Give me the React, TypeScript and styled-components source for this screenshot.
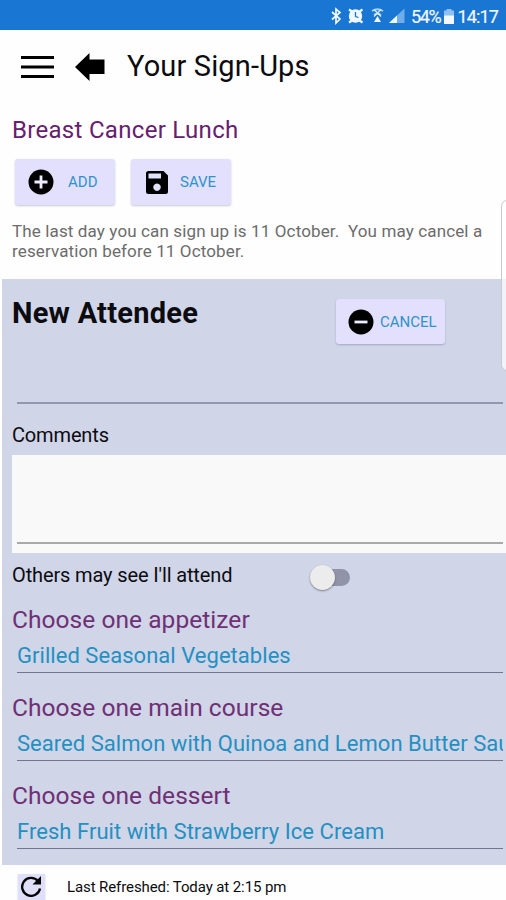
import React from 'react';
import styled, { createGlobalStyle } from 'styled-components';

const GlobalStyle = createGlobalStyle`
  *, *::before, *::after { box-sizing: border-box; }
  body { margin: 0; background: #fff; font-family: Roboto, "Liberation Sans", sans-serif; color: #0c0c10; }
  h1, h2, p { margin: 0; font-weight: 400; }
  button { font: inherit; border: 0; padding: 0; }
`;

const Screen = styled.div`
  position: relative;
  width: 506px;
  height: 900px;
  overflow: hidden;
  display: flex;
  flex-direction: column;
  background: #fefefe;
  white-space: nowrap;
`;

const StatusBar = styled.div`
  height: 30px;
  flex: none;
  display: flex;
  align-items: center;
  justify-content: flex-end;
  padding: 2px 5px 0 0;
  background: #1976d2;
  color: #f2f8ff;
  font-size: 18px;
  svg { display: block; flex: none; }
`;

const StatusText = styled.span<{ $width: number; $spacing: number }>`
  width: ${(p) => p.$width}px;
  letter-spacing: ${(p) => p.$spacing}px;
  -webkit-text-stroke: 0.2px currentColor;
`;

const Header = styled.header`
  height: 72px;
  flex: none;
  display: flex;
  align-items: center;
  padding: 2px 0 0 21px;
  svg { display: block; }
`;

const Title = styled.h1`
  margin: -2px 0 0 22px;
  font-size: 29px;
  line-height: 40px;
  letter-spacing: 0.15px;
`;

const EventName = styled.h2`
  height: 56px;
  flex: none;
  padding: 12px 0 0 12px;
  font-size: 24px;
  line-height: 32px;
  letter-spacing: 0.3px;
  color: #66206f;
`;

const Actions = styled.div`
  flex: none;
  display: flex;
  gap: 16px;
  padding: 1px 0 0 15px;
`;

const ActionButton = styled.button<{ $width: number; $gap: number; $pad: number }>`
  width: ${(p) => p.$width}px;
  height: 46px;
  display: flex;
  align-items: center;
  gap: ${(p) => p.$gap}px;
  padding-left: ${(p) => p.$pad}px;
  border-radius: 3px;
  background: #e2e0fd;
  box-shadow: 0 1px 2px rgba(40, 40, 80, 0.25);
  color: #2f93c9;
  font-size: 15px;
  svg { display: block; flex: none; }
`;

const CancelButton = styled(ActionButton)`
  height: 45px;
`;

const Notice = styled.p`
  height: 74px;
  flex: none;
  padding: 16px 0 0 12px;
  font-size: 17px;
  line-height: 20px;
  letter-spacing: 0.13px;
  color: #6c6c6c;
  white-space: pre;
`;

const Panel = styled.main`
  height: 586px;
  flex: none;
  margin-left: 2px;
  padding-left: 10px;
  background: #d0d5e8;
  overflow: hidden;
`;

const PanelHead = styled.div`
  height: 74px;
  display: flex;
  align-items: flex-start;
  padding-top: 20px;
`;

const PanelTitle = styled.h2`
  width: 324px;
  margin-top: -6px;
  font-size: 29px;
  line-height: 40px;
  font-weight: 700;
  letter-spacing: 0.25px;
`;

const NameField = styled.div`
  height: 51px;
  margin: 0 3px 0 5px;
  border-bottom: 2px solid #9097ae;
`;

const Label = styled.div`
  height: 51px;
  padding-top: 16px;
  font-size: 20px;
  line-height: 30px;
  letter-spacing: -0.15px;
`;

const Comments = styled.div`
  height: 98px;
  padding: 0 3px 9px 5px;
  background: #f9f9f9;
  &::after {
    content: '';
    display: block;
    height: 89px;
    border-bottom: 2px solid #a9a9a9;
  }
`;

const SwitchRow = styled.div`
  height: 48px;
  display: flex;
  align-items: center;
  font-size: 20px;
  letter-spacing: -0.13px;
`;

const SwitchLabel = styled.span`
  width: 298px;
  margin-top: -4px;
`;

const Track = styled.span`
  display: flex;
  align-items: center;
  width: 40px;
  height: 17px;
  margin-top: 1px;
  border-radius: 9px;
  background: linear-gradient(to right, transparent 12px, #9194a9 12px);
`;

const Thumb = styled.span`
  flex: none;
  width: 25px;
  height: 25px;
  border-radius: 50%;
  background: #ececec;
  box-shadow: 0 1px 2px rgba(0, 0, 0, 0.4);
`;

const Course = styled.section`
  height: 88.2px;
`;

const CourseTitle = styled.h2`
  height: 36px;
  font-size: 24.5px;
  line-height: 38px;
  letter-spacing: 0.05px;
  color: #6f3075;
`;

const CourseChoice = styled.div`
  height: 36px;
  margin: 0 3px 0 5px;
  overflow: hidden;
  border-bottom: 1.5px solid #71778f;
  font-size: 22px;
  line-height: 38px;
  letter-spacing: 0.04px;
  color: #2490c2;
`;

const Footer = styled.footer`
  height: 35px;
  display: flex;
  align-items: center;
  padding: 8px 0 0 18px;
  font-size: 15px;
  letter-spacing: -0.1px;
`;

const RefreshButton = styled.button`
  width: 27px;
  height: 26px;
  margin: 0 22px 0 0;
  display: grid;
  place-items: center;
  background: #e0dffa;
  box-shadow: 0 1px 2px rgba(40, 40, 80, 0.2);
`;

const EdgeHandle = styled.div`
  position: absolute;
  left: 501px;
  top: 200px;
  width: 14px;
  height: 171px;
  border: 1px solid #c8cad0;
  border-radius: 6px;
  background: rgba(255, 255, 255, 0.72);
`;

const StatusIcons = () => (
  <svg width="81" height="20" viewBox="330 6 81 20" fill="none">
    <path d="M332 12l8 7-4 4V9l4 3.500-8 7" stroke="#f2f8ff" strokeWidth="1.700" />
    <g stroke="#f2f8ff" strokeWidth="2.200">
      <path d="M349 9.500l3 2M362.500 9.500l-3 2M349 22.500l3-2M362.500 22.500l-3-2" />
    </g>
    <circle cx="355.500" cy="16" r="6.700" fill="#f2f8ff" />
    <path d="M355.500 12v4.500l3 1" stroke="#1976d2" strokeWidth="1.300" />
    <path d="M372 11q5.500-3.500 11 0M374 15q3.500-2.500 7 0" stroke="#a9d0f5" strokeWidth="1.800" />
    <path d="M374 9.500l7 7M381 9.500l-7 7" stroke="#d8eaff" strokeWidth="1.300" />
    <path d="M377.500 16l3.500 6h-7z" fill="#f2f8ff" />
    <path d="M404.500 8.500V23H389z" fill="#6facea" />
    <path d="M397 15.600V23h-8z" fill="#f2f8ff" />
  </svg>
);

const Battery = () => (
  <svg width="10" height="15" viewBox="0 0 10 15">
    <path d="M2.500 0h5v1.500H10V15H0V1.500h2.500z" fill="#8fc0ef" />
    <path d="M0 6.500h10V15H0z" fill="#f2f8ff" />
  </svg>
);

const MenuIcon = () => (
  <svg width="33" height="24" viewBox="0 0 33 24">
    <path d="M0 2.500h33M0 12h33M0 21.500h33" stroke="#000" strokeWidth="3" />
  </svg>
);

const BackIcon = () => (
  <svg width="30" height="28" viewBox="0 0 30 28">
    <path d="M0 14L14.500 0v6.500H29.500v14.500H14.500V28z" fill="#000" />
  </svg>
);

const BackSlot = styled.span`
  margin-left: 21px;
`;

const CircleIcon = ({ plus = false }: { plus?: boolean }) => (
  <svg width="26" height="26" viewBox="0 0 26 26">
    <circle cx="13" cy="13" r="12.500" fill="#000" />
    <path d={plus ? 'M6.500 13h13M13 6.500v13' : 'M6.500 13h13'} stroke="#eeedff" strokeWidth="2.800" />
  </svg>
);

const SaveIcon = () => (
  <svg width="22" height="23" viewBox="0 0 22 23">
    <path
      fillRule="evenodd"
      d="M2.500 0H17.500L22 4.500V20.500Q22 23 19.500 23H2.500Q0 23 0 20.500V2.500Q0 0 2.500 0ZM2.500 2.600V7.500H15V2.600ZM11 12.500a3.700 3.700 0 1 0 .01 0Z"
      fill="#000"
    />
  </svg>
);

const RefreshIcon = () => (
  <svg width="21" height="21" viewBox="0 0 21 21" fill="none">
    <path d="M17 5A9 9 0 1 0 19 12.500" stroke="#050508" strokeWidth="2.300" />
    <path d="M20 0V8.500H11.500Z" fill="#050508" />
  </svg>
);

const courses = [
  { title: 'Choose one appetizer', choice: 'Grilled Seasonal Vegetables' },
  { title: 'Choose one main course', choice: 'Seared Salmon with Quinoa and Lemon Butter Sauce' },
  { title: 'Choose one dessert', choice: 'Fresh Fruit with Strawberry Ice Cream' },
];

export default function App() {
  return (
    <Screen>
      <GlobalStyle />
      <StatusBar>
        <StatusIcons />
        <StatusText $width={33} $spacing={-1.4}>54%</StatusText>
        <Battery />
        <StatusText $width={47} $spacing={-0.9}>&nbsp;14:17</StatusText>
      </StatusBar>
      <Header>
        <MenuIcon />
        <BackSlot><BackIcon /></BackSlot>
        <Title>Your Sign-Ups</Title>
      </Header>
      <EventName>Breast Cancer Lunch</EventName>
      <Actions>
        <ActionButton $width={100} $gap={14} $pad={13}><CircleIcon plus />ADD</ActionButton>
        <ActionButton $width={100} $gap={12} $pad={15}><SaveIcon />SAVE</ActionButton>
      </Actions>
      <Notice>{'The last day you can sign up is 11 October.  You may cancel a\nreservation before 11 October.'}</Notice>
      <Panel>
        <PanelHead>
          <PanelTitle>New Attendee</PanelTitle>
          <CancelButton $width={109} $gap={6} $pad={12}><CircleIcon />CANCEL</CancelButton>
        </PanelHead>
        <NameField />
        <Label>Comments</Label>
        <Comments />
        <SwitchRow>
          <SwitchLabel>Others may see I'll attend</SwitchLabel>
          <Track><Thumb /></Track>
        </SwitchRow>
        {courses.map((c) => (
          <Course key={c.title}>
            <CourseTitle>{c.title}</CourseTitle>
            <CourseChoice>{c.choice}</CourseChoice>
          </Course>
        ))}
      </Panel>
      <Footer>
        <RefreshButton aria-label="Refresh"><RefreshIcon /></RefreshButton>
        Last Refreshed: Today at 2:15 pm
      </Footer>
      <EdgeHandle />
    </Screen>
  );
}
